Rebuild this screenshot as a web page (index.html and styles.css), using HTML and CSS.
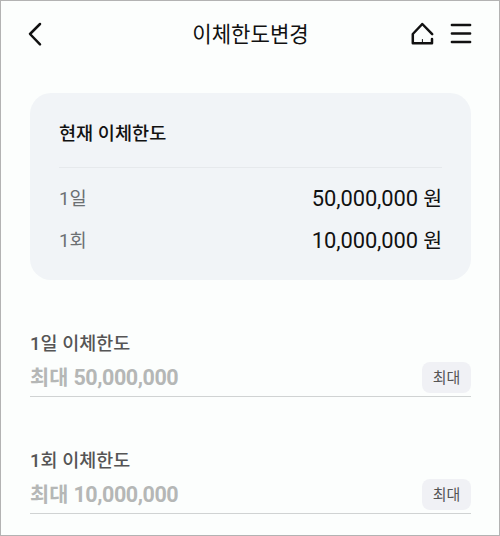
FILE: index.html
```html
<!DOCTYPE html>
<html lang="ko">
<head>
    <meta charset="UTF-8">
    <meta name="viewport" content="width=device-width, initial-scale=1.0">
    <title>이체한도변경</title>
    <link rel="stylesheet" href="styles.css">
</head>
<body>
    <div class="screen">
        <header class="header">
            <a href="#" class="back-button" aria-label="이전">
                <svg width="16" height="26" viewBox="0 0 16 26"><path d="M14 3L4 13L14 23.3"/></svg>
            </a>
            <h1 class="title">이체한도변경</h1>
            <div class="menu">
                <svg width="24" height="24" viewBox="0 0 24 24"><path d="M21.2 12.2L11.3 2L1.8 12V21.3H21V17"/><path class="door" d="M11.4 17.5V21"/></svg>
                <svg width="22" height="24" viewBox="0 0 22 24"><path d="M1.9 3H20.1M1.9 11.6H20.1M1.9 20.1H20.1"/></svg>
            </div>
        </header>

        <section class="card">
            <h2 class="card-title">현재 이체한도</h2>
            <div class="row">
                <span class="label">1일</span>
                <span class="amount">50,000,000 <span class="won">원</span></span>
            </div>
            <div class="row">
                <span class="label">1회</span>
                <span class="amount">10,000,000 <span class="won">원</span></span>
            </div>
        </section>

        <div class="field">
            <div class="field-label">1일 이체한도</div>
            <div class="field-input">
                <span class="placeholder">최대 <span class="num">50,000,000</span></span>
                <button class="max-button">최대</button>
            </div>
        </div>
        <div class="field">
            <div class="field-label">1회 이체한도</div>
            <div class="field-input">
                <span class="placeholder">최대 <span class="num">10,000,000</span></span>
                <button class="max-button">최대</button>
            </div>
        </div>
    </div>
</body>
</html>
```
FILE: styles.css
```css
* {
    box-sizing: border-box;
}

body {
    margin: 0;
    background-color: #fcfefd;
    font-family: Roboto, "Noto Sans CJK KR", sans-serif;
    color: #111;
}

.screen {
    height: 536px;
    padding: 0 28px 0 29px;
    border: 1px solid #b3b3b3;
    overflow: hidden;
}

.header {
    display: grid;
    grid-template-columns: 80px 1fr 80px;
    align-items: center;
    height: 66px;
}

.back-button {
    display: flex;
    margin-left: -4px;
}

.header svg {
    fill: none;
    stroke: #111;
    stroke-width: 2.5;
    stroke-linecap: round;
    stroke-linejoin: round;
}

.header .door {
    stroke-width: 1;
}

.title {
    margin: 0;
    padding-top: 2px;
    font-size: 21.1px;
    font-weight: 400;
    line-height: 30px;
    text-align: center;
}

.menu {
    display: flex;
    justify-content: flex-end;
    gap: 15px;
    margin-right: -1px;
}

.card {
    height: 187px;
    margin-top: 26px;
    padding: 0 29px;
    background-color: #f1f4f7;
    border-radius: 21px;
}

.card-title {
    height: 75px;
    margin: 0 0 10px;
    padding-top: 27px;
    border-bottom: 1px solid #e6e9ec;
    font-size: 18.6px;
    font-weight: 500;
    line-height: 28px;
}

.row {
    display: flex;
    justify-content: space-between;
    align-items: center;
    height: 42px;
}

.label {
    padding-bottom: 6px;
    color: #6c7073;
    font-size: 18.7px;
}

.amount {
    font-size: 21.9px;
    line-height: 30px;
    letter-spacing: -0.1px;
}

.won {
    font-size: 20.5px;
}

.field {
    height: 67px;
    margin-top: 50px;
}

.field-label {
    height: 31px;
    padding-top: 1px;
    color: #555;
    font-size: 18.5px;
    font-weight: 500;
    line-height: 26px;
}

.field-input {
    display: flex;
    justify-content: space-between;
    height: 36px;
    border-bottom: 1px solid #d0d3d3;
}

.placeholder {
    color: #b5b7b6;
    font-size: 20.8px;
    font-weight: 700;
    line-height: 33px;
}

.num {
    font-size: 21.5px;
    letter-spacing: -0.45px;
}

.max-button {
    width: 49px;
    height: 31px;
    margin-top: 1px;
    padding: 0 0 2px;
    border: 0;
    border-radius: 8px;
    background-color: #f0f1f5;
    color: #555;
    font-family: inherit;
    font-size: 15px;
}
```
